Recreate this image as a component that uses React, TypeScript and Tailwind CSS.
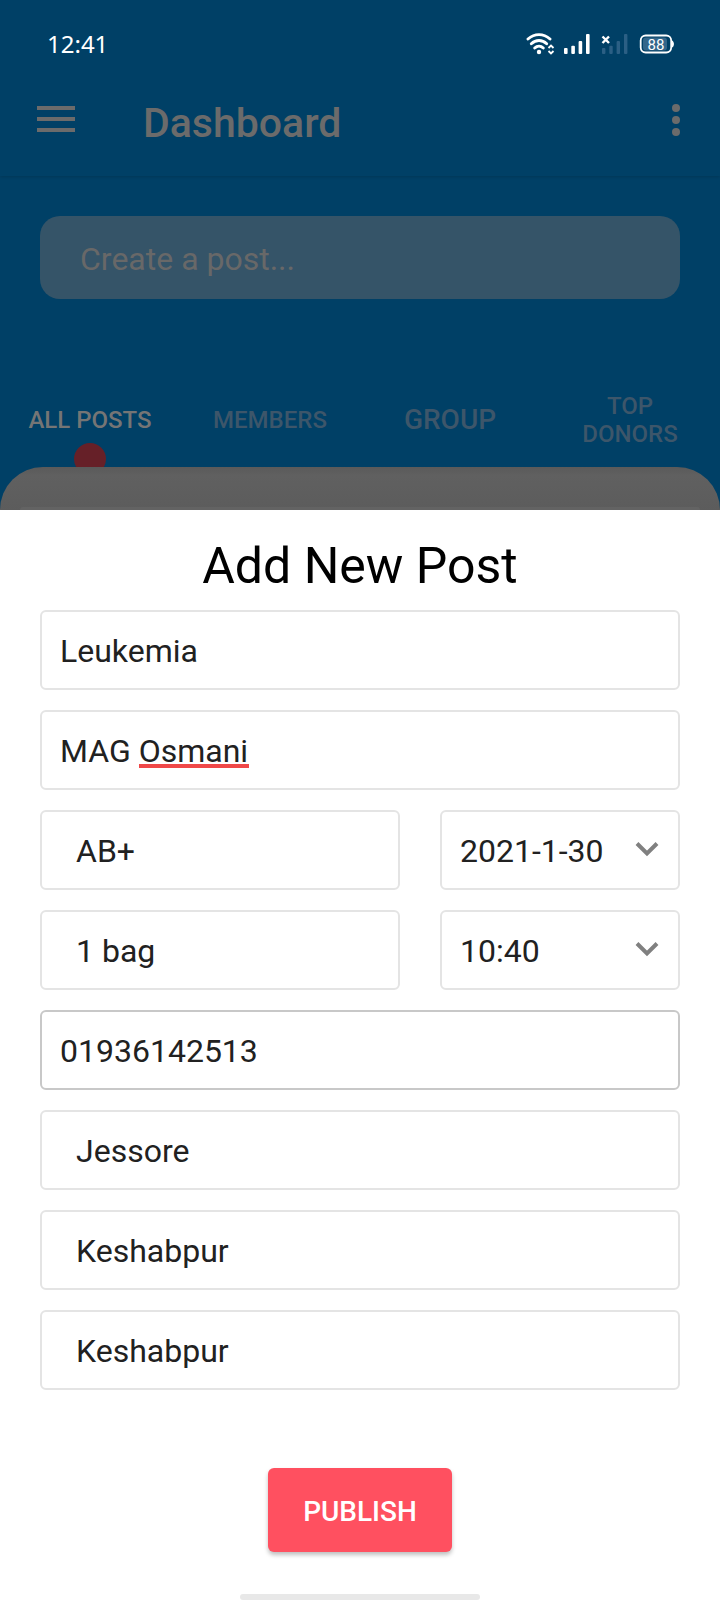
import { useState, type ReactNode } from "react";

const tabs = [
  { label: "ALL POSTS", className: "text-[#757575] text-2xl/7" },
  { label: "MEMBERS", className: "text-[#3d566a] text-2xl/7" },
  { label: "GROUP", className: "text-[#3d566a] text-[28px]/8" },
  { label: "TOP DONORS", className: "text-[#3d566a] text-2xl/7" },
];

const fieldBox =
  "block h-20 w-full appearance-none rounded-md border-2 bg-white pt-0.5 text-[32px] text-[#212121] outline-none";

function TextField({
  label,
  initial,
  border,
  children,
}: {
  label: string;
  initial: string;
  border: string;
  children?: ReactNode;
}) {
  const [value, setValue] = useState(initial);
  return (
    <div className="relative">
      <input
        type="text"
        aria-label={label}
        spellCheck={false}
        value={value}
        onChange={(e) => setValue(e.target.value)}
        className={`${fieldBox} ${border} px-[18px]`}
      />
      {value === initial && children}
    </div>
  );
}

function SelectField({
  label,
  options,
  chevron = false,
}: {
  label: string;
  options: string[];
  chevron?: boolean;
}) {
  return (
    <div className="relative">
      <select
        aria-label={label}
        className={`${fieldBox} border-[#e4e4e4] ${chevron ? "px-[18px]" : "px-[34px]"}`}
      >
        {options.map((option) => (
          <option key={option}>{option}</option>
        ))}
      </select>
      {chevron && (
        <svg
          aria-hidden="true"
          viewBox="0 0 24 16"
          className="pointer-events-none absolute top-[31px] right-[21px] h-4 w-6"
          fill="none"
          stroke="#808080"
          strokeWidth="4"
        >
          <path d="M2 2.5 12 12.5 22 2.5" />
        </svg>
      )}
    </div>
  );
}

function StatusIcons() {
  return (
    <svg aria-hidden="true" viewBox="0 0 152 24" className="h-6 w-[152px]" fill="#fff">
      <g fill="none" stroke="#fff" strokeWidth="2.9" strokeLinecap="round">
        <path d="M2 7C8.5 1.2 17.500 1.2 24 7" />
        <path d="M5.300 11.700C9.800 7.400 16.200 7.400 20.700 11.700" />
        <path d="M8.700 16C11.200 13.600 14.800 13.600 17.300 16" />
      </g>
      <circle cx="13" cy="20" r="2.200" />
      <path
        d="M22.500 16 25 13.500 27.500 16M22.500 19 25 21.500 27.500 19"
        fill="none"
        stroke="#fff"
        strokeWidth="1.800"
      />
      <rect x="38" y="16" width="3.600" height="6" rx="1" />
      <rect x="45.300" y="13.800" width="3.600" height="8.200" rx="1" />
      <rect x="52.600" y="9" width="3.600" height="13" rx="1" />
      <rect x="60" y="2" width="3.600" height="20" rx="1" />
      <g fill="#2b5f84">
        <rect x="76" y="16" width="3.400" height="6" rx="1" />
        <rect x="83.300" y="13.800" width="3.400" height="8.200" rx="1" />
        <rect x="90.600" y="9" width="3.400" height="13" rx="1" />
        <rect x="98" y="2" width="3.400" height="20" rx="1" />
      </g>
      <path d="M76.500 4.500 83 11M83 4.500 76.500 11" stroke="#fff" strokeWidth="2.400" />
      <rect x="117" y="5.500" width="24" height="13" rx="3" fill="#33668a" />
      <rect x="114.700" y="3.500" width="30.500" height="17" rx="5" fill="none" stroke="#fff" strokeWidth="1.800" />
      <path d="M146 8.500c2.600 1 2.600 6 0 7z" />
      <text x="130" y="17.500" textAnchor="middle" fontSize="15" fontFamily="Roboto, sans-serif">
        88
      </text>
    </svg>
  );
}

export default function App() {
  return (
    <div className="flex min-h-screen flex-col bg-[#004066] font-[Roboto,sans-serif]">
      <header className="shadow-[0_1px_3px_rgba(0,0,0,0.15)]">
        <div className="flex h-16 items-end justify-between pr-[42px] pl-[47px]">
          <span className="font-['Noto_Sans',sans-serif] text-2xl/10 text-white">12:41</span>
          <div className="pb-2">
            <StatusIcons />
          </div>
        </div>
        <div className="flex h-28 items-center pt-1 pr-8 pl-9">
          <button type="button" aria-label="Open menu" className="flex items-center pb-1.5">
            <svg aria-hidden="true" viewBox="0 0 40 28" className="h-7 w-10" fill="#6b6b6b">
              <path d="M1 1h38v4H1zM1 12h38v4H1zM1 23h38v4H1z" />
            </svg>
          </button>
          <h1 className="ml-[67px] flex-1 pt-0.5 text-[41px]/12 font-medium text-[#6b6b6b]">
            Dashboard
          </h1>
          <button type="button" aria-label="More options" className="flex pb-1">
            <svg aria-hidden="true" viewBox="0 0 24 34" className="h-[34px] w-6" fill="#6b6b6b">
              <circle cx="12" cy="5" r="4" />
              <circle cx="12" cy="17" r="4" />
              <circle cx="12" cy="29" r="4" />
            </svg>
          </button>
        </div>
      </header>

      <div className="px-10 pt-10 pb-[72px]">
        <input
          type="text"
          aria-label="Create a post"
          placeholder="Create a post..."
          className="block h-[83px] w-full rounded-[20px] bg-[#355468] px-10 pt-0.5 text-[32px] text-[#757575] outline-none placeholder:text-[#686868]"
        />
      </div>

      <nav className="grid h-24 grid-cols-4 overflow-hidden">
        {tabs.map((tab, index) => (
          <button
            key={tab.label}
            type="button"
            className={`relative px-9 pt-0.5 text-center font-medium ${index === 0 ? "whitespace-nowrap" : ""} ${tab.className}`}
          >
            <span className="flex justify-center">{tab.label}</span>
            {index === 0 && (
              <span className="absolute top-[72px] left-1/2 size-8 -translate-x-1/2 rounded-full bg-[#662028]" />
            )}
          </button>
        ))}
      </nav>

      <div className="flex h-[43px] flex-col justify-end rounded-t-[48px] bg-linear-to-b from-[#5a5a5a] via-[#606060] via-20% to-[#5c5c5c] px-5">
        <div className="h-[3px] rounded-t-sm bg-[#636363]" />
      </div>

      <form
        onSubmit={(e) => e.preventDefault()}
        className="flex flex-1 flex-col bg-white"
        aria-labelledby="sheet-title"
      >
        <h2 id="sheet-title" className="pt-6 pb-3 text-center text-[50px]/16 text-black">
          Add New Post
        </h2>
        <div className="flex flex-col gap-5 px-10">
          <TextField label="Problem" initial="Leukemia" border="border-[#e4e4e4]" />
          <TextField label="Hospital" initial="MAG Osmani" border="border-[#e4e4e4]">
            <span className="absolute top-[54px] left-[99px] h-1 w-[110px] bg-[#f04848]" />
          </TextField>
          <div className="grid grid-cols-[3fr_2fr] gap-x-10 gap-y-5">
            <SelectField label="Blood group" options={["AB+", "AB-", "A+", "A-", "B+", "B-", "O+", "O-"]} />
            <SelectField label="Date" options={["2021-1-30"]} chevron />
            <SelectField label="Amount" options={["1 bag", "2 bags", "3 bags"]} />
            <SelectField label="Time" options={["10:40"]} chevron />
          </div>
          <TextField label="Phone number" initial="01936142513" border="border-[#c8c8c8]" />
          <SelectField label="District" options={["Jessore"]} />
          <SelectField label="Upazila" options={["Keshabpur"]} />
          <SelectField label="Area" options={["Keshabpur"]} />
        </div>
        <div className="flex flex-1 flex-col items-center justify-between pt-[78px]">
          <button
            type="submit"
            className="h-21 w-46 rounded-md bg-[#ff5060] pt-1 text-[28px] font-medium text-white shadow-[0_3px_4px_rgba(0,0,0,0.25)]"
          >
            PUBLISH
          </button>
          <div className="mt-10 h-1.5 w-60 rounded-full bg-[#e8e8e8]" />
        </div>
      </form>
    </div>
  );
}
